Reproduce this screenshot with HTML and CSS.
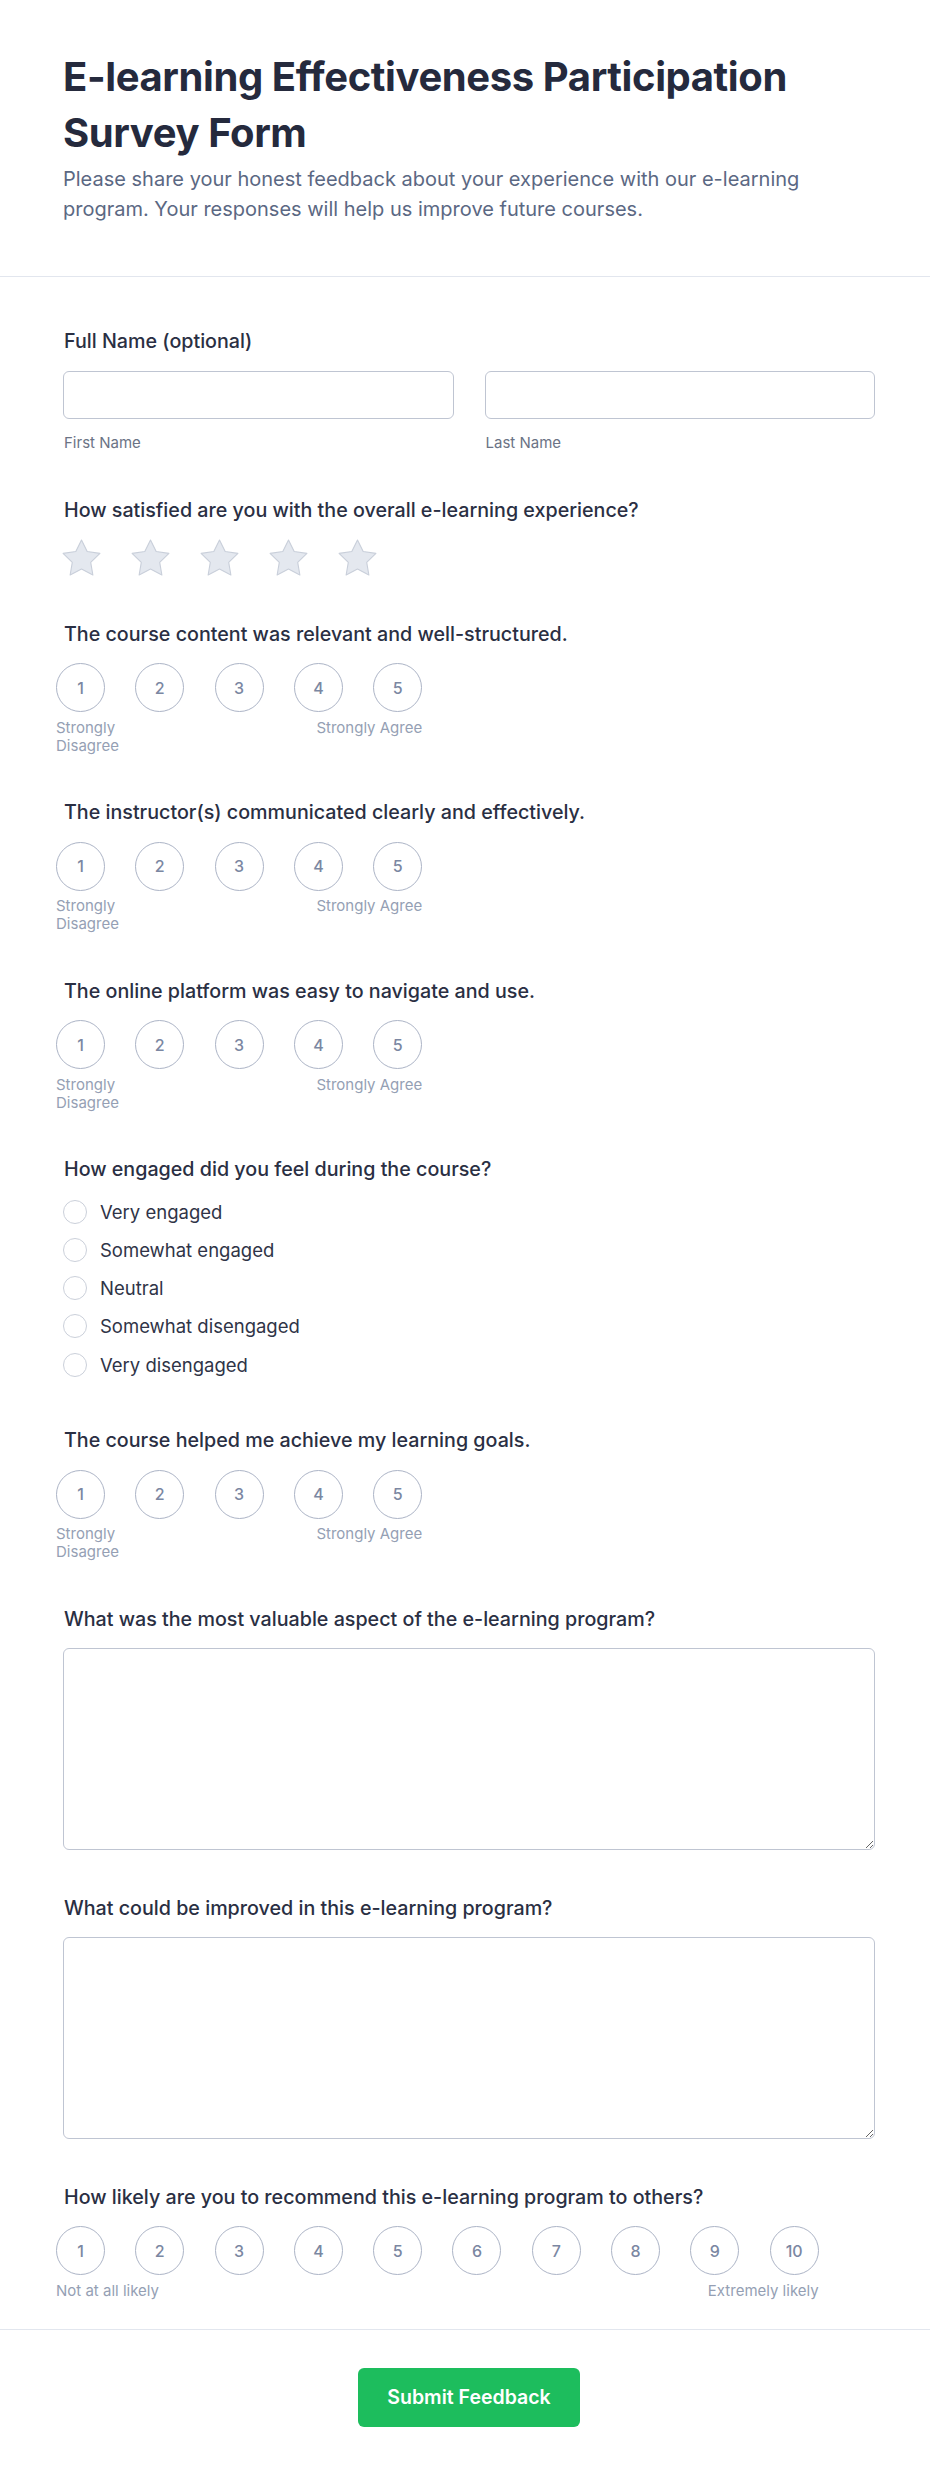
FILE: index.html
```html
<!DOCTYPE html>
<html lang="en">
<head>
    <meta charset="UTF-8">
    <meta name="viewport" content="width=device-width, initial-scale=1.0">
    <title>E-learning Effectiveness Participation Survey Form</title>
    <link rel="stylesheet" href="styles.css">
</head>
<body>

<div class="survey">
    <div class="survey-header">
        <h1>E-learning Effectiveness Participation Survey Form</h1>
        <p class="survey-intro">Please share your honest feedback about your experience with our e-learning program. Your responses will help us improve future courses.</p>
    </div>

    <form class="survey-form">
        <div class="field">
            <div class="question">Full Name (optional)</div>
            <div class="name-row">
                <div>
                    <input type="text" class="text-input" name="first_name" aria-label="First Name">
                    <div class="caption">First Name</div>
                </div>
                <div>
                    <input type="text" class="text-input" name="last_name" aria-label="Last Name">
                    <div class="caption">Last Name</div>
                </div>
            </div>
        </div>

        <div class="field">
            <div class="question">How satisfied are you with the overall e-learning experience?</div>
            <div class="stars">
                <svg class="star" viewBox="2 2 20 19.02"><path d="M12 2l3.09 6.26L22 9.27l-5 4.87 1.18 6.88L12 17.77l-6.18 3.25L7 14.14 2 9.27l6.91-1.01L12 2z"/></svg>
                <svg class="star" viewBox="2 2 20 19.02"><path d="M12 2l3.09 6.26L22 9.27l-5 4.87 1.18 6.88L12 17.77l-6.18 3.25L7 14.14 2 9.27l6.91-1.01L12 2z"/></svg>
                <svg class="star" viewBox="2 2 20 19.02"><path d="M12 2l3.09 6.26L22 9.27l-5 4.87 1.18 6.88L12 17.77l-6.18 3.25L7 14.14 2 9.27l6.91-1.01L12 2z"/></svg>
                <svg class="star" viewBox="2 2 20 19.02"><path d="M12 2l3.09 6.26L22 9.27l-5 4.87 1.18 6.88L12 17.77l-6.18 3.25L7 14.14 2 9.27l6.91-1.01L12 2z"/></svg>
                <svg class="star" viewBox="2 2 20 19.02"><path d="M12 2l3.09 6.26L22 9.27l-5 4.87 1.18 6.88L12 17.77l-6.18 3.25L7 14.14 2 9.27l6.91-1.01L12 2z"/></svg>
            </div>
        </div>

        <div class="field">
            <div class="question">The course content was relevant and well-structured.</div>
            <div class="scale">
                <div class="scale-points">
                    <span class="point">1</span><span class="point">2</span><span class="point">3</span><span class="point">4</span><span class="point">5</span>
                </div>
                <div class="scale-labels"><span>Strongly Disagree</span><span>Strongly Agree</span></div>
            </div>
        </div>

        <div class="field">
            <div class="question">The instructor(s) communicated clearly and effectively.</div>
            <div class="scale">
                <div class="scale-points">
                    <span class="point">1</span><span class="point">2</span><span class="point">3</span><span class="point">4</span><span class="point">5</span>
                </div>
                <div class="scale-labels"><span>Strongly Disagree</span><span>Strongly Agree</span></div>
            </div>
        </div>

        <div class="field">
            <div class="question">The online platform was easy to navigate and use.</div>
            <div class="scale">
                <div class="scale-points">
                    <span class="point">1</span><span class="point">2</span><span class="point">3</span><span class="point">4</span><span class="point">5</span>
                </div>
                <div class="scale-labels"><span>Strongly Disagree</span><span>Strongly Agree</span></div>
            </div>
        </div>

        <div class="field">
            <div class="question">How engaged did you feel during the course?</div>
            <div class="options">
                <label class="option"><input type="radio" name="engaged"> Very engaged</label>
                <label class="option"><input type="radio" name="engaged"> Somewhat engaged</label>
                <label class="option"><input type="radio" name="engaged"> Neutral</label>
                <label class="option"><input type="radio" name="engaged"> Somewhat disengaged</label>
                <label class="option"><input type="radio" name="engaged"> Very disengaged</label>
            </div>
        </div>

        <div class="field">
            <div class="question">The course helped me achieve my learning goals.</div>
            <div class="scale">
                <div class="scale-points">
                    <span class="point">1</span><span class="point">2</span><span class="point">3</span><span class="point">4</span><span class="point">5</span>
                </div>
                <div class="scale-labels"><span>Strongly Disagree</span><span>Strongly Agree</span></div>
            </div>
        </div>

        <div class="field">
            <div class="question">What was the most valuable aspect of the e-learning program?</div>
            <textarea class="text-area" name="valuable"></textarea>
        </div>

        <div class="field">
            <div class="question">What could be improved in this e-learning program?</div>
            <textarea class="text-area" name="improve"></textarea>
        </div>

        <div class="field">
            <div class="question">How likely are you to recommend this e-learning program to others?</div>
            <div class="scale">
                <div class="scale-points">
                    <span class="point">1</span><span class="point">2</span><span class="point">3</span><span class="point">4</span><span class="point">5</span><span class="point">6</span><span class="point">7</span><span class="point">8</span><span class="point">9</span><span class="point">10</span>
                </div>
                <div class="scale-labels"><span>Not at all likely</span><span>Extremely likely</span></div>
            </div>
        </div>
    </form>

    <div class="survey-footer">
        <button type="submit" class="submit-btn">Submit Feedback</button>
    </div>
</div>

</body>
</html>
```

FILE: styles.css
```css
body {
    font-family: Inter, 'Noto Sans', sans-serif;
    margin: 0;
    padding: 0;
    background-color: #ffffff;
    color: #2b3044;
}

.survey-header {
    padding: 49px 55px 52px 63px;
    border-bottom: 1px solid #e2e6ee;
}

.survey-header h1 {
    margin: 0 0 3px;
    font-size: 40px;
    line-height: 56px;
    font-weight: 700;
    letter-spacing: -0.4px;
    color: #252a3d;
}

.survey-intro {
    margin: 0;
    font-size: 20px;
    line-height: 30px;
    color: #5b6883;
}

.survey-form {
    padding: 50px 55px 29.5px 63px;
}

.field {
    margin-bottom: 43.5px;
}

.field:last-child {
    margin-bottom: 0;
}

.question {
    font-size: 19.7px;
    line-height: 28px;
    font-weight: 500;
    color: #2a2f43;
    margin-bottom: 15.5px;
    padding-left: 1px;
}

.name-row {
    display: grid;
    grid-template-columns: 1fr 1fr;
    gap: 31px;
}

.text-input {
    display: block;
    box-sizing: border-box;
    width: 100%;
    height: 48px;
    border: 1.5px solid #bfc5d2;
    border-radius: 6px;
    font: inherit;
    padding: 0 12px;
}

.caption {
    margin-top: 14px;
    padding-left: 1px;
    font-size: 15px;
    line-height: 20px;
    color: #6b7385;
}

.stars {
    display: flex;
    gap: 32px;
    padding: 0.5px 0 1px;
}

.star {
    width: 37px;
    height: 35px;
    overflow: visible;
    fill: #e4e8ef;
    stroke: #c9cfda;
    stroke-width: 0.6;
    stroke-linejoin: round;
}

.scale {
    display: inline-flex;
    flex-direction: column;
    margin-left: -7px;
}

.scale-points {
    display: flex;
    gap: 30.3px;
}

.point {
    box-sizing: border-box;
    width: 49px;
    height: 49px;
    border: 1.5px solid #acb4c6;
    border-radius: 50%;
    display: flex;
    align-items: center;
    justify-content: center;
    font-size: 16px;
    font-weight: 500;
    color: #7b87a2;
    cursor: pointer;
}

.scale-labels {
    display: flex;
    justify-content: space-between;
    margin-top: 6.5px;
    font-size: 15px;
    line-height: 18px;
    color: #959fb4;
}

.scale-labels span {
    max-width: 118px;
}

.options {
    display: flex;
    flex-direction: column;
    gap: 12.3px;
    padding-bottom: 5px;
}

.option {
    display: flex;
    align-items: center;
    gap: 13px;
    font-size: 18.5px;
    line-height: 26px;
    color: #2f3447;
    cursor: pointer;
}

.option input {
    appearance: none;
    margin: 0;
    width: 24px;
    height: 24px;
    border: 1.5px solid #cbd0da;
    border-radius: 50%;
    background: #fff;
}

.text-area {
    display: block;
    box-sizing: border-box;
    width: 100%;
    height: 202px;
    border: 1.5px solid #bfc5d2;
    border-radius: 6px;
    font: inherit;
    padding: 10px 12px;
    resize: vertical;
}

.survey-footer {
    border-top: 1px solid #e2e6ee;
    padding: 37.7px 55px 49px 63px;
    text-align: center;
}

.submit-btn {
    background-color: #1dbd5d;
    color: #ffffff;
    border: none;
    border-radius: 6px;
    font-family: inherit;
    font-size: 19.5px;
    line-height: 27px;
    font-weight: 600;
    padding: 16px 29.5px;
    cursor: pointer;
}
```
